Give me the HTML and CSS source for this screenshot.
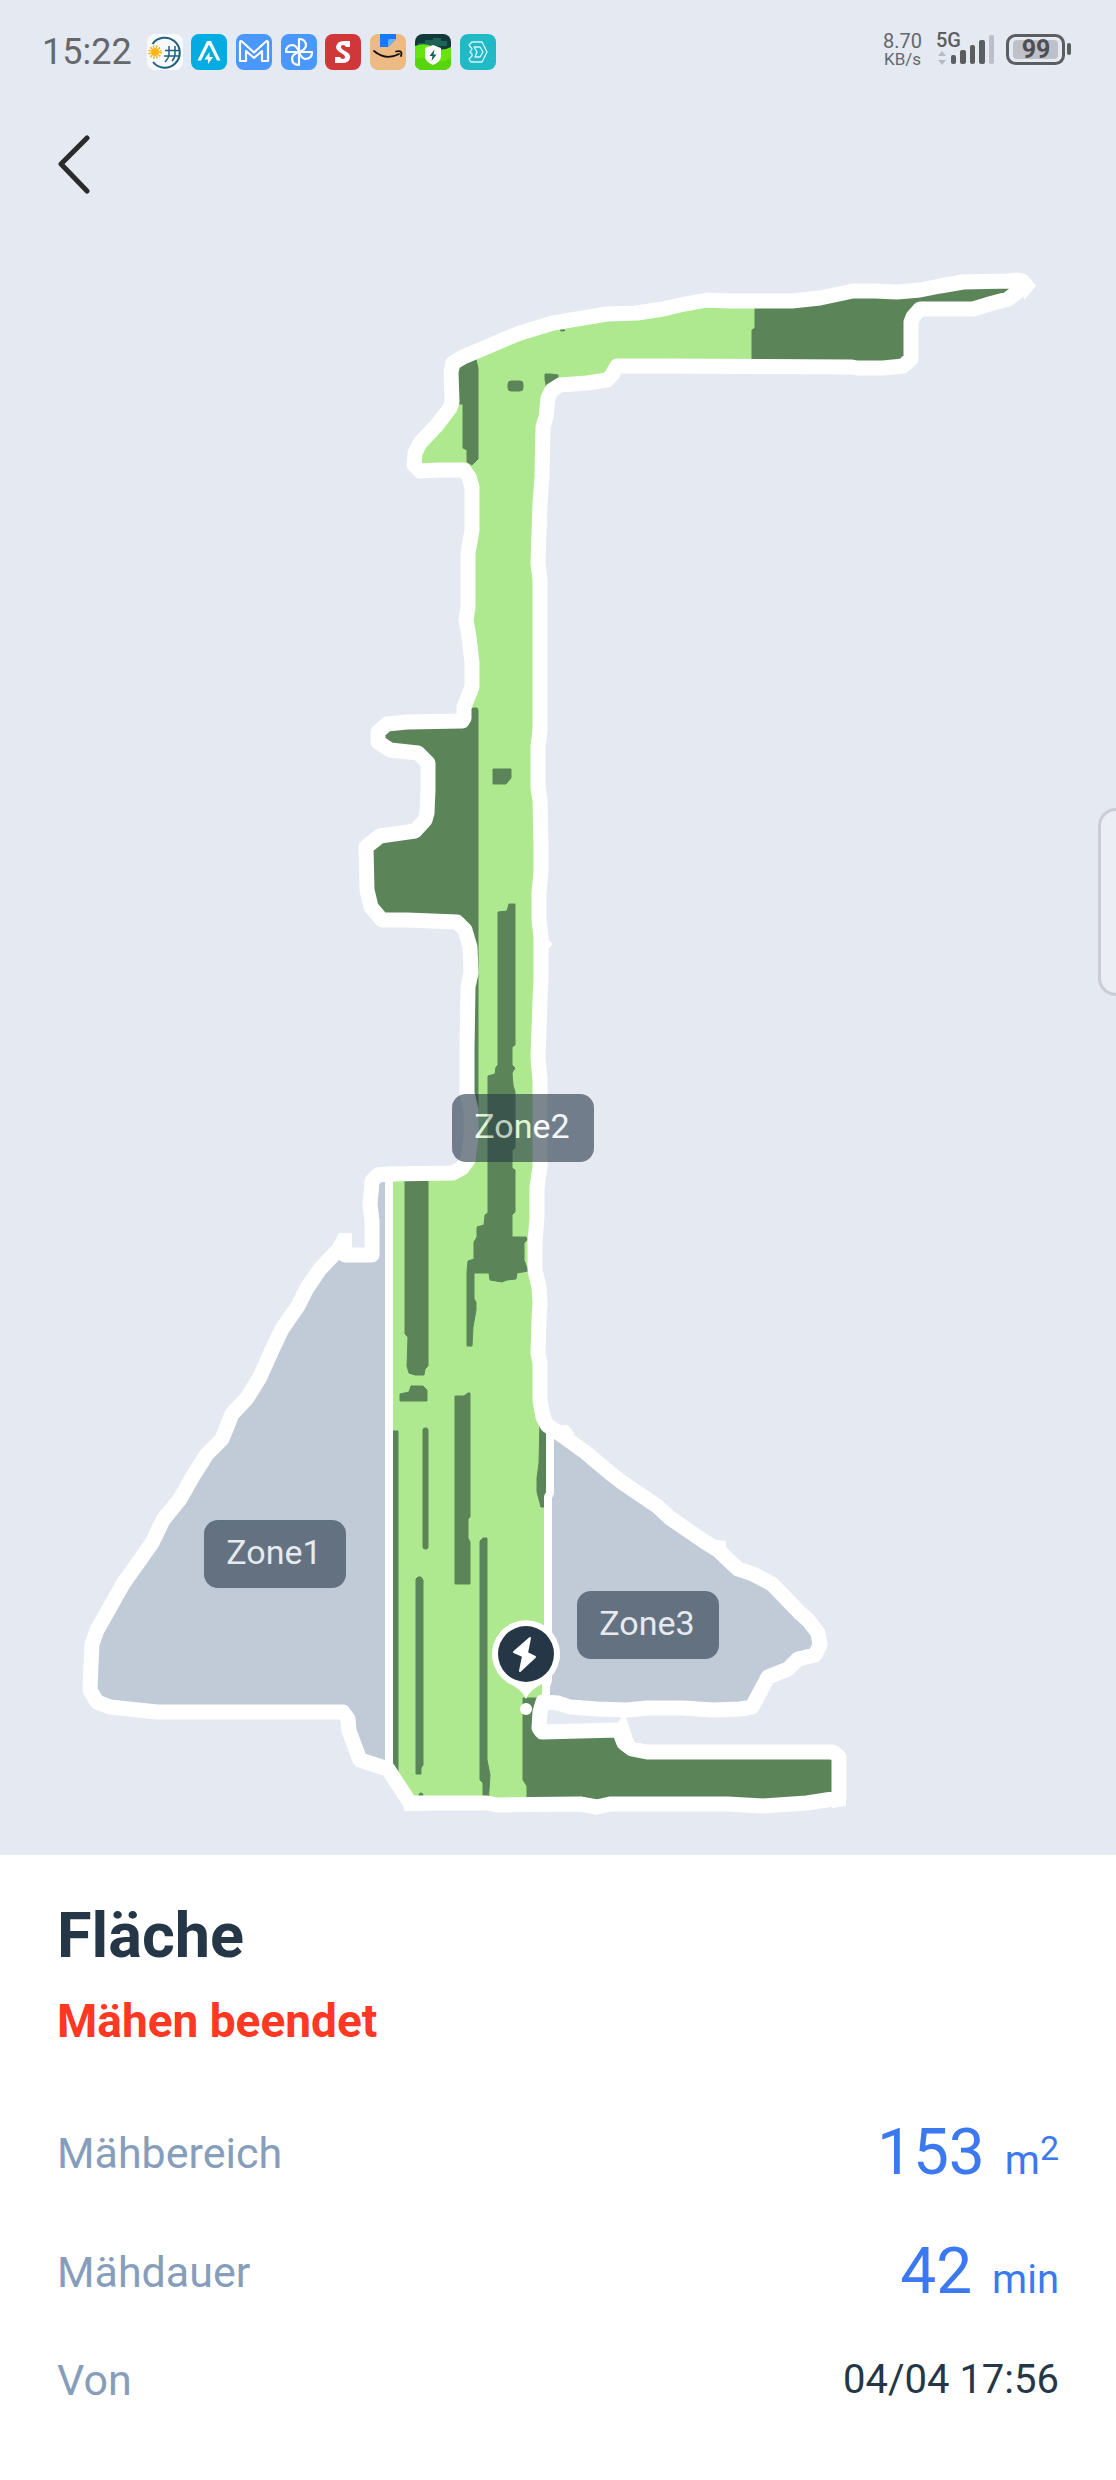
FILE: index.html
```html
<!DOCTYPE html>
<html lang="de">
<head>
<meta charset="utf-8">
<meta name="viewport" content="width=device-width, initial-scale=1">
<title>Fläche</title>
<link rel="stylesheet" href="styles.css">
</head>
<body>
<div class="screen">
  <header class="status">
    <div class="status-left">
      <time class="clock">15:22</time>
      <div class="apps">
        <svg class="app" viewBox="0 0 36 36" aria-hidden="true">
          <rect width="36" height="36" rx="8" fill="#f8f9fa"/>
          <path d="M5.500 10A15 15 0 1 1 6 28" fill="none" stroke="#1f5f82" stroke-width="2"/>
          <path d="M22 12v8q0 4-4 8M28 12v8q0 4-3 7M18 16.500h14M17 22h15" fill="none" stroke="#1f5f82" stroke-width="1.500"/>
          <circle cx="8" cy="18" r="4" fill="#fdb515"/>
          <circle cx="8" cy="18" r="5.500" fill="none" stroke="#fdb515" stroke-width="2.500" stroke-dasharray="1.500 1.400"/>
        </svg>
        <svg class="app" viewBox="0 0 36 36" aria-hidden="true">
          <rect width="36" height="36" rx="8" fill="#02ace0"/>
          <path d="M6.500 26.500L16 7h4l9.500 19.500H26L18 10.500 10 26.500Z" fill="#fff"/>
          <path d="M18.500 18l-5 7.500h3.500v4.500l5-7h-3.500Z" fill="#fff"/>
        </svg>
        <svg class="app" viewBox="0 0 36 36" aria-hidden="true">
          <rect width="36" height="36" rx="8" fill="#4a97fd"/>
          <path d="M4 27V8.500Q4 6.500 6 7.500L18 18.500 30 7.500Q32 6.500 32 8.500V27H26V17L18 24 10 17V27Z" fill="none" stroke="#fff" stroke-width="2.200" stroke-linejoin="round"/>
        </svg>
        <svg class="app" viewBox="0 0 36 36" aria-hidden="true">
          <rect width="36" height="36" rx="8" fill="#4a97fd"/>
          <g fill="none" stroke="#fff" stroke-width="2.200" stroke-linejoin="round">
            <path d="M18 18V5Q25 5 25 12 24 16 18 18Z"/>
            <path d="M18 18H31Q31 25 24 25 20 24 18 18Z"/>
            <path d="M18 18V31Q11 31 11 24 12 20 18 18Z"/>
            <path d="M18 18H5Q5 11 12 11 16 12 18 18Z"/>
          </g>
        </svg>
        <svg class="app" viewBox="0 0 36 36" aria-hidden="true">
          <rect width="36" height="36" rx="8" fill="#d03738"/>
          <path d="M25 7v6h-4q-1-2-3-2t-2 2q0 2 4 4 6 3 5 7-1 5-8 5h-7v-6h5q1 2 3 2t2-2q0-2-4-4-5-3-5-6 1-6 8-6Z" fill="#fff"/>
        </svg>
        <svg class="app" viewBox="0 0 36 36" aria-hidden="true">
          <rect width="36" height="36" rx="8" fill="#edba84"/>
          <path d="M10 0H26V5L18 13H10Z" fill="#1679ff"/>
          <path d="M18 13V7Q18 5 20 5H26Z" fill="#6db2ff"/>
          <path d="M4 17Q16 27 29 20M26 17.500Q33 15.500 31 22" fill="none" stroke="#111" stroke-width="1.800" stroke-linecap="round"/>
        </svg>
        <svg class="app" viewBox="0 0 36 36" aria-hidden="true">
          <rect width="36" height="36" rx="8" fill="#12393a"/>
          <path d="M3 9h7V6h8V4h8v3h6v5H3Z" fill="#1d6457"/>
          <path d="M0 12Q10 8 18 13T36 13V28Q36 36 28 36H8Q0 36 0 28Z" fill="#66e410"/>
          <path d="M0 25Q9 22 18 26T36 24V28Q36 36 28 36H8Q0 36 0 28Z" fill="#58d40c"/>
          <path d="M18 11l8 3v8q0 6-8 9-8-3-8-9V14Z" fill="#fff"/>
          <path d="M19.500 15.500l-5 6.500h3l-1 5 5-6.500h-3Z" fill="#136254"/>
        </svg>
        <svg class="app" viewBox="0 0 36 36" aria-hidden="true">
          <rect width="36" height="36" rx="8" fill="#22b9c7"/>
          <g fill="none" stroke="#d9f5f7" stroke-width="1.300" stroke-linejoin="round">
            <path d="M12 8h10l5 10-5 10H11l-2-3 3-3v-2l-2-2 2-3-3-4Z"/>
            <path d="M14 13h6l3 5-3 5h-5l2-5Z"/>
          </g>
        </svg>
      </div>
    </div>
    <div class="status-right">
      <div class="speed"><span class="rate">8.70</span><span class="unit">KB/s</span></div>
      <svg class="signal" viewBox="0 0 60 36" role="img" aria-label="5G">
        <text x="-1" y="13" class="net">5G</text>
        <path d="M1 22l4-5 4 5ZM1 26l4 5 4-5Z" fill="#b9bbc4"/>
        <g fill="#5c5d61">
          <rect x="14" y="21" width="5" height="9" rx="2"/>
          <rect x="23" y="16" width="6" height="14" rx="2"/>
          <rect x="33" y="11" width="5" height="19" rx="2"/>
          <rect x="42" y="6" width="6" height="24" rx="2"/>
        </g>
        <rect x="52" y="1" width="5" height="29" rx="2" fill="#bcbfc8"/>
      </svg>
      <svg class="battery" viewBox="0 0 66 36" role="img" aria-label="99 %">
        <rect x="1.500" y="1.500" width="56" height="28" rx="8" fill="none" stroke="#5c5d61" stroke-width="3"/>
        <rect x="7" y="6" width="45" height="19" rx="4" fill="#bfc1ca"/>
        <rect x="61" y="9" width="4" height="12" rx="2" fill="#5c5d61"/>
        <text x="30" y="24" text-anchor="middle" class="charge">99</text>
      </svg>
    </div>
  </header>

  <nav class="toolbar">
    <button class="back" type="button" aria-label="Zurück">
      <svg viewBox="0 0 36 60" aria-hidden="true"><path d="M30 4L4 30L30 57" fill="none" stroke="#2b2b2b" stroke-width="5" stroke-linecap="round" stroke-linejoin="round"/></svg>
    </button>
  </nav>

  <main class="map">
    <svg class="map-canvas" viewBox="0 224 1116 1631">
      <defs>
        <clipPath id="zone2">
          <path d="M680 305L707 300 730 301 792 301 820 298 853 291 875 291 897 292 920 290 940 286 963 282 1010 281 1020 280 1027 286 1008 299 993 303 973 309 920 309 913 317 911 322 911 359 903 366 883 368 857 368 852 367 660 366 617 366 612 375 607 380 587 383 560 385 552 390 548 398 546 417 543 427 542 477 540 503 539 533 538 563 540 580 540 650 540 730 538 747 538 787 540 800 541 847 541 872 539 893 539 920 541 937 541 980 540 1000 539 1030 538 1057 540 1080 540 1167 537 1187 537 1217 535 1243 535 1270 539 1287 540 1303 539 1320 538 1353 540 1363 540 1400 543 1417 547 1425 550 1432 550 1493 548 1497 548 1680 546 1700 540 1712 539 1728 542 1732 617 1731 620 1728 624 1743 632 1749 647 1752 833 1752 839 1757 839 1798 807 1803 763 1806 727 1804 610 1804 597 1807 580 1804 497 1805 487 1803 410 1803 388 1768 389 1175 453 1173 462 1168 468 1160 471 1137 471 1110 467 1093 467 1050 468 987 471 973 470 947 465 930 457 922 407 920 382 920 371 907 367 890 366 847 380 836 415 831 425 820 427 813 428 790 428 763 418 753 390 750 378 742 378 732 387 724 407 722 462 721 464 718 464 707 472 687 472 663 469 637 466 620 468 607 468 553 472 530 472 487 469 477 464 470 440 470 420 471 414 465 415 453 420 443 437 425 450 408 452 402 451 372 453 363 463 357 503 340 520 333 553 323 607 314 637 313 663 309Z"/>
        </clipPath>
      </defs>

      <!-- zones 1 and 3: not mown -->
      <g fill="#c1cbd8">
        <path d="M389 1175L372 1178 372 1255 345 1255 342 1246 320 1269 307 1288 298 1306 282 1329 272 1350 260 1377 247 1398 232 1414 222 1439 207 1454 193 1476 180 1499 163 1520 152 1543 123 1584 97 1630 91 1665 90 1688 110 1707 157 1712 343 1712 360 1760 388 1769Z"/>
        <path d="M549 1426L585 1452 610 1473 657 1506 705 1542 738 1569 772 1584 818 1633 820 1645 815 1655 798 1659 768 1677 752 1707 597 1709 558 1703 546 1702Z"/>
      </g>

      <!-- zone 2: mown lanes, then the parts left over -->
      <g clip-path="url(#zone2)">
        <rect x="350" y="260" width="700" height="1560" fill="#afe98f"/>
        <g fill="#5b8559" stroke="#5b8559" stroke-width="1" stroke-linejoin="round">
          <path d="M755 270V328L752 330V380H1040V270Z"/>
          <path d="M475 355L478 368 478 459 472 465 467 462 467 450 463 448 463 404 440 404 440 355Z"/>
          <rect x="508" y="381" width="15" height="10" rx="3"/>
          <path d="M545 374H551L558 375V392H546V384L545 379Z"/>
          <path d="M560 330H565L564 331H561Z"/>
          <path d="M471 710L473 708H477L478 710V1114L476 1110H440L340 960V715H471Z"/>
          <path d="M493 769H511V778L506 784H493Z"/>
          <path d="M509 904L515 904 515 1045 512 1047 512 1065 515 1068 512 1073 513 1085 515 1092 515 1148 512 1150 512 1168 515 1170 515 1212 512 1215 512 1237 526 1237 527 1240 524 1243 524 1260 528 1271 517 1273 516 1279 507 1280 502 1282 490 1280 489 1273 474 1273 474 1299 476 1302 476 1310 473 1327 472 1346 467 1346 467 1272 468 1261 474 1259 474 1242 477 1237 477 1227 484 1225 485 1215 488 1213 488 1076 495 1074 496 1067 498 1065 498 912 507 911Z"/>
          <path d="M405 1170H428V1366L425 1369 424 1375H415L409 1373 407 1366 408 1337 405 1334Z"/>
          <path d="M400 1394L409 1392 411 1386H423L427 1390V1401H400Z"/>
          <path d="M390 1431H398V1780H390Z"/>
          <rect x="423" y="1428" width="5" height="121" rx="2"/>
          <path d="M455 1396L464 1396 468 1393H470V1517L468 1519V1538L470 1542V1584H455Z"/>
          <path d="M416 1579L418 1577H421L423 1580V1765L421 1768V1774H416Z"/>
          <path d="M480 1541L483 1538H487V1760L490 1775 488 1805H483V1783L480 1780Z"/>
          <path d="M540 1420H552V1493H546L544 1507H541L537 1492V1478L539 1463Z"/>
          <path d="M523 1698H560V1725H850V1815H527V1786L523 1780Z"/>
          <circle cx="421" cy="1795" r="2"/>
        </g>
      </g>

      <!-- dividers between the zones -->
      <g fill="none" stroke="#fff" stroke-width="8">
        <path d="M389 1175V1768"/>
        <path d="M550 1430V1493L548 1497V1680L546 1686V1702"/>
      </g>

      <!-- garden boundary -->
      <g fill="none" stroke="#fff" stroke-width="15" stroke-linejoin="round">
        <path d="M547 1425L543 1417 540 1400 540 1363 538 1353 539 1320 540 1303 539 1287 535 1270 535 1243 537 1217 537 1187 540 1167 540 1080 538 1057 539 1030 540 1000 541 980 541 937 539 920 539 893 541 872 541 847 540 800 538 787 538 747 540 730 540 580 538 563 539 533 540 503 542 477 543 427 546 417 548 398 552 390 560 385 587 383 607 380 612 375 617 366 660 366 852 367 857 368 883 368 903 366 911 359 911 322 913 317 920 309 973 309 993 303 1008 299 1025 286 1018 280 1010 281 963 282 940 286 920 290 897 292 875 291 853 291 820 298 792 301 730 301 707 300 680 305 663 309 637 313 607 314 553 323 520 333 503 340 463 357 453 363 451 372 452 402 450 408 437 425 420 443 415 453 414 465 420 471 440 470 464 470 469 477 472 487 472 530 468 553 468 607 466 620 469 637 472 663 472 687 464 707 464 718 462 721 407 722 387 724 378 732 378 742 390 750 418 753 428 763 428 790 427 813 425 820 415 831 380 836 366 847 367 890 371 907 382 920 407 920 457 922 465 930 470 947 471 973 468 987 467 1050 467 1093 471 1110 471 1137 468 1160 462 1168 453 1173 389 1174 378 1175 372 1181 370 1205 372 1221 372 1255 345 1255 344 1244 342 1246 320 1269 307 1288 298 1306 282 1329 272 1350 260 1377 247 1398 232 1414 222 1439 207 1454 193 1476 180 1499 163 1520 152 1543 123 1584 97 1630 92 1644 91 1665 90 1690 97 1702 110 1707 157 1712 343 1712 348 1719 349 1731 360 1760 388 1769 410 1803 487 1803 497 1805 580 1804 597 1807 610 1804 727 1804 763 1806 807 1803 839 1798 839 1757 833 1752 647 1752 632 1749 624 1743 619 1730 542 1732 539 1728 540 1712 543 1702 558 1703 570 1707 597 1709 627 1710 647 1708 683 1708 713 1710 740 1709 752 1707 760 1692 768 1677 788 1669 798 1659 815 1655 820 1645 818 1633 808 1620 800 1613 772 1584 753 1574 738 1569 718 1550 705 1542 670 1518 657 1506 623 1483 610 1473 585 1452 560 1434Z"/>
      </g>
      <g fill="#fff">
        <path d="M339 1233H352V1250H330Z"/>
        <path d="M616 1725L622 1717H626L634 1742H616Z"/>
        <path d="M1022 273L1027 275 1036 286 1024 300Z"/>
        <path d="M545 937L553 944 546 951Z"/>
        <path d="M550 1420L560 1425H568L575 1434H550ZM716 1540L726 1541V1550Z"/>
        <path d="M404 1796V1811H425V1796ZM832 1795V1808L846 1806V1790Z"/>
      </g>

      <!-- charging station -->
      <g>
        <path d="M526 1699Q522 1689 508 1683A34 34 0 1 1 544 1683Q530 1689 526 1699Z" fill="#fff"/>
        <circle cx="526" cy="1654" r="28" fill="#253746"/>
        <path d="M530 1638L514 1652 523 1656 520 1671 535 1657 527 1653Z" fill="#fff" stroke="#fff" stroke-width="2" stroke-linejoin="round"/>
        <circle cx="526" cy="1709" r="6" fill="#fff"/>
      </g>

      <g class="zone">
        <rect x="204" y="1520" width="142" height="68" rx="14"/>
        <text x="274" y="1564">Zone1</text>
      </g>
      <g class="zone">
        <rect x="452" y="1094" width="142" height="68" rx="14"/>
        <text x="522" y="1138">Zone2</text>
      </g>
      <g class="zone">
        <rect x="577" y="1591" width="142" height="68" rx="14"/>
        <text x="647" y="1635">Zone3</text>
      </g>
    </svg>
    <div class="edge-handle"></div>
  </main>

  <section class="panel">
    <h1>Fläche</h1>
    <p class="state">Mähen beendet</p>
    <dl class="facts">
      <div class="fact"><dt>Mähbereich</dt><dd class="figure"><span>153</span><span class="measure">m<sup>2</sup></span></dd></div>
      <div class="fact"><dt>Mähdauer</dt><dd class="figure"><span>42</span><span class="measure">min</span></dd></div>
      <div class="fact"><dt>Von</dt><dd class="date">04/04 17:56</dd></div>
    </dl>
  </section>
</div>
</body>
</html>
```
FILE: styles.css
```css
* {
  box-sizing: border-box;
}

body {
  margin: 0;
  background: #fff;
  color: #253746;
  font-family: Roboto, "Liberation Sans", sans-serif;
}

svg {
  display: block;
}

.screen {
  display: flex;
  flex-direction: column;
  min-height: 100vh;
}

.status,
.toolbar,
.map {
  background: #e4e9f2;
}

/* status bar */
.status {
  display: flex;
  justify-content: space-between;
  height: 104px;
  padding: 34px 44px 0 42px;
  color: #66676b;
}

.status-left {
  display: flex;
  align-items: center;
  height: 36px;
  gap: 15px;
}

.clock {
  font-size: 36px;
  line-height: 36px;
}

.apps {
  display: flex;
  justify-content: space-between;
  width: 349px;
}

.app {
  width: 36px;
  height: 36px;
}

.status-right {
  display: flex;
  gap: 9px;
}

.speed {
  display: flex;
  flex-direction: column;
  align-items: center;
  margin-top: -2px;
  margin-right: 6px;
}

.rate {
  font-size: 20px;
  line-height: 18px;
}

.unit {
  font-size: 17px;
  line-height: 18px;
}

.signal {
  width: 60px;
  height: 36px;
  overflow: visible;
}

.net {
  fill: #5c5d61;
  font-size: 20px;
  font-weight: 500;
}

.battery {
  width: 66px;
  height: 36px;
}

.charge {
  fill: #4e4f53;
  font-size: 25px;
  font-weight: 700;
}

/* toolbar */
.toolbar {
  height: 120px;
  padding: 30px 57px;
}

.back {
  display: block;
  padding: 0;
  border: 0;
  background: none;
}

.back svg {
  width: 36px;
  height: 60px;
}

/* map */
.map {
  position: relative;
}

.map-canvas {
  width: 100%;
  height: auto;
}

.zone {
  opacity: 0.6;
}

.zone rect {
  fill: #253746;
}

.zone text {
  fill: #fff;
  font-size: 34px;
  text-anchor: middle;
}

.edge-handle {
  position: absolute;
  top: 584px;
  right: 0;
  width: 18px;
  height: 188px;
  border: 3px solid #cacdd8;
  border-right: 0;
  border-radius: 28px 0 0 28px;
  background: #ebeef4;
}

/* details */
.panel {
  padding: 44px 57px;
}

h1 {
  margin: 0 0 21px;
  font-size: 63px;
  line-height: 74px;
}

.state {
  margin: 0 0 67px;
  color: #ff3823;
  font-size: 46px;
  font-weight: 700;
  line-height: 54px;
}

.facts {
  display: flex;
  flex-direction: column;
  gap: 43px;
  margin: 0;
}

.fact {
  display: flex;
  align-items: center;
  justify-content: space-between;
}

dt {
  color: #869dbb;
  font-size: 43px;
  line-height: 54px;
}

dd {
  margin: 0;
}

.figure {
  display: flex;
  align-items: baseline;
  gap: 20px;
  color: #3c78f0;
  font-size: 64px;
  line-height: 76px;
}

.measure {
  font-size: 40px;
  line-height: 48px;
}

.measure sup {
  font-size: 34px;
  line-height: 0;
  vertical-align: 14px;
}

.date {
  font-size: 40px;
  line-height: 54px;
}
```
